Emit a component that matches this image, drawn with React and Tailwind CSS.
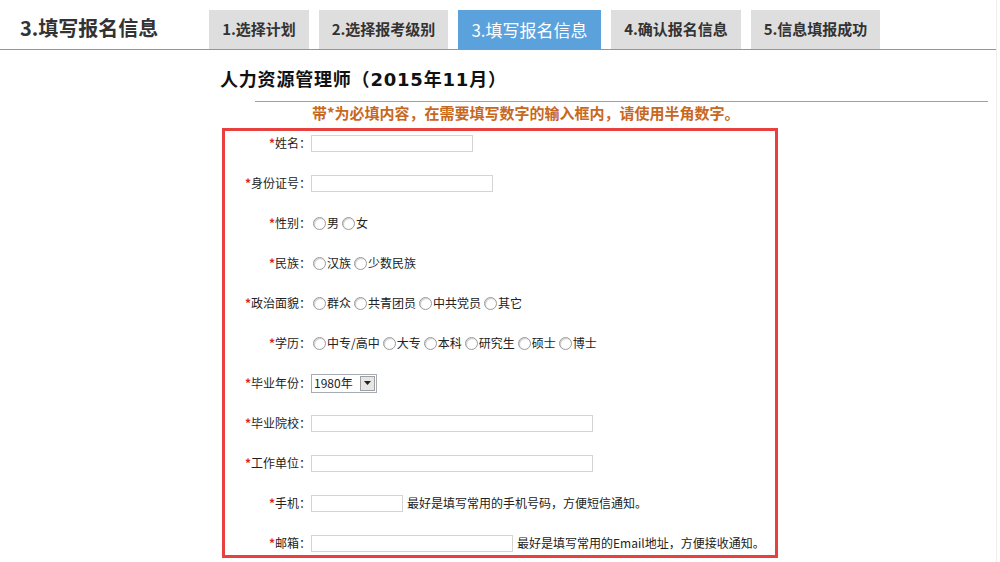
import React from 'react';

const tabs = [
    {label: '1.选择计划', width: 'w-[100px]', active: false},
    {label: '2.选择报考级别', width: 'w-[129px]', active: false},
    {label: '3.填写报名信息', width: 'w-[143px]', active: true},
    {label: '4.确认报名信息', width: 'w-[130px]', active: false},
    {label: '5.信息填报成功', width: 'w-[129px]', active: false},
];

function Radio({label}) {
    return (
        <span className="inline-flex items-center mr-px">
            <span className="inline-block w-[13px] h-[13px] ml-[2px] mr-px rounded-full border border-[#9a9a9a] bg-white shadow-[inset_1px_1px_1px_#ccc]"></span>
            <span>{label}</span>
        </span>
    );
}

function TextBox({width}) {
    return <span className={`inline-block h-[17px] border border-[#d4d4d4] bg-white ${width}`}></span>;
}

function Row({label, children}) {
    return (
        <div className="flex items-center h-[24px]">
            <div className="w-[86px] text-right whitespace-nowrap">
                <span className="text-[#e02020] font-bold">*</span>{label}：
            </div>
            <div className="flex items-center whitespace-nowrap">{children}</div>
        </div>
    );
}

export default function App() {
    return (
        <div className="w-[997px] min-h-[562px] border-r border-[#eeeeee] bg-white text-[#222]"
             style={{fontFamily: '"Noto Sans CJK SC", "Noto Sans", sans-serif'}}>
            {/* header with steps */}
            <div className="flex items-end h-[50px] border-b border-[#6a9fd4]">
                <div className="w-[209px] pl-5 mb-[9px] text-[20px] leading-[24px] font-bold text-[#333]">3.填写报名信息</div>
                <div className="flex gap-[10px] h-[39px]">
                    {tabs.map(tab => (
                        <div key={tab.label}
                             className={`${tab.width} h-full flex items-center justify-center ${tab.active ? 'bg-[#5ba1dc] text-white text-[17px]' : 'bg-[#dedede] text-[#333] text-[15px] font-bold'}`}>
                            {tab.label}
                        </div>
                    ))}
                </div>
            </div>

            <div className="pl-[220px]">
                <div className="mt-[19px] text-[18px] leading-[22px] font-bold text-[#111] tracking-[0.8px] font-['DejaVu_Sans','Noto_Sans_CJK_SC',sans-serif]">人力资源管理师（2015年11月）</div>
                <div className="mt-[10px] ml-[35px] w-[733px] h-px bg-[#a0a0a0]"></div>
                <div className="mt-px ml-[92px] text-[15px] leading-[20px] font-bold text-[#c8681e]">
                    带*为必填内容，在需要填写数字的输入框内，请使用半角数字。
                </div>

                <div className="mt-[5px] ml-[2px] w-[556px] border-[3px] border-[#e8403f] flex flex-col gap-[16px] text-[12px] text-[#222]">
                    <Row label="姓名"><TextBox width="w-[162px]"/></Row>
                    <Row label="身份证号"><TextBox width="w-[182px]"/></Row>
                    <Row label="性别"><Radio label="男"/><Radio label="女"/></Row>
                    <Row label="民族"><Radio label="汉族"/><Radio label="少数民族"/></Row>
                    <Row label="政治面貌">
                        <Radio label="群众"/><Radio label="共青团员"/><Radio label="中共党员"/><Radio label="其它"/>
                    </Row>
                    <Row label="学历">
                        <Radio label="中专/高中"/><Radio label="大专"/><Radio label="本科"/><Radio label="研究生"/><Radio label="硕士"/><Radio label="博士"/>
                    </Row>
                    <Row label="毕业年份">
                        <span className="inline-flex items-center h-[19px] w-[66px] border border-[#a5acb5] bg-white pl-[2px]">
                            <span className="flex-1 text-[12px]">1980年</span>
                            <span className="w-[15px] h-[15px] mr-px border border-[#a0a0a0] bg-[#e6e6e6] flex items-center justify-center">
                                <svg width="7" height="4" viewBox="0 0 7 4"><path d="M0 0h7L3.5 4z" fill="#222"/></svg>
                            </span>
                        </span>
                    </Row>
                    <Row label="毕业院校"><TextBox width="w-[282px]"/></Row>
                    <Row label="工作单位"><TextBox width="w-[282px]"/></Row>
                    <Row label="手机">
                        <TextBox width="w-[92px]"/>
                        <span className="ml-[4px]">最好是填写常用的手机号码，方便短信通知。</span>
                    </Row>
                    <Row label="邮箱">
                        <TextBox width="w-[202px]"/>
                        <span className="ml-[4px]">最好是填写常用的Email地址，方便接收通知。</span>
                    </Row>
                </div>
            </div>
        </div>
    );
}
